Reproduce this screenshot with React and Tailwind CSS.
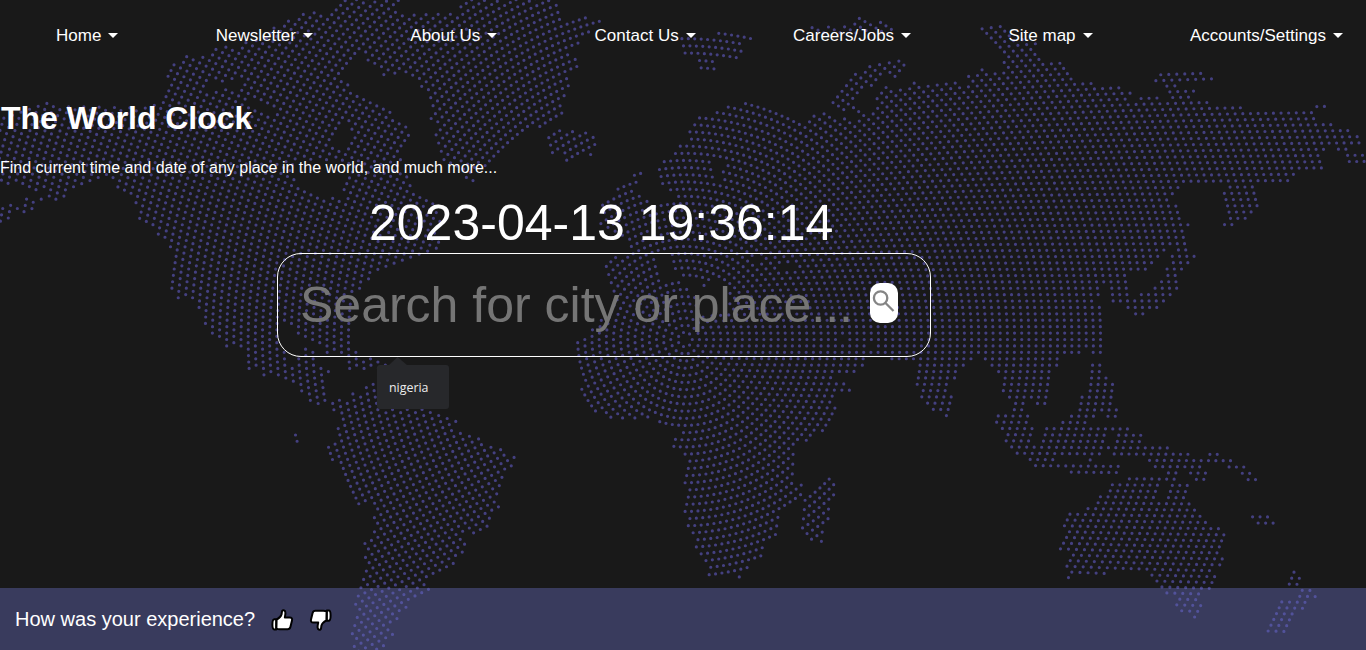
import React from "react";

/* Land and sea outlines. Units are thirds of a pixel, relative to each origin. */
const LAND = [
  // North America with the Arctic islands and Greenland
  [450, 0, "-470,350 -350,308 -250,312 -150,318 -10,318 40,300 38,285 45,262 52,205 85,178 108,160 130,170 160,162 190,140 248,140 300,122 350,95 400,62 440,45 460,32 495,28 515,38 535,38 570,-10 750,-10 745,20 765,38 790,45 830,35 918,33 950,-10 1222,-10 1232,30 1240,62 1262,65 1288,48 1350,52 1355,70 1325,90 1308,108 1292,140 1265,140 1255,165 1285,170 1288,205 1265,222 1260,262 1248,290 1242,345 1220,358 1190,380 1135,395 1095,420 1060,450 1020,490 980,510 978,550 965,548 930,520 890,490 873,475 875,455 855,435 850,402 852,375 835,355 855,335 838,300 832,275 808,262 800,235 785,232 735,225 702,232 685,205 650,188 640,165 620,168 605,185 592,205 580,222 590,238 608,265 640,278 670,297 725,322 745,360 775,370 788,405 775,432 760,460 750,500 775,525 785,560 800,575 835,592 870,640 870,750 765,785 690,815 650,845 618,880 608,930 608,1050 590,1062 528,1062 520,1040 398,975 400,1050 412,1075 432,1095 442,1070 458,1058 455,1036 475,1036 498,1048 502,1105 540,1105 548,1118 530,1135 535,1208 500,1222 450,1182 425,1150 380,1132 345,1120 342,1135 320,1108 295,1115 288,1050 232,1045 205,1020 180,1002 165,975 155,935 120,902 80,895 55,855 65,745 35,722 15,692 -5,680 -35,668 -40,640 -55,600 -75,588 -102,565 -110,540 -190,545 -210,562 -235,570 -245,592 -275,598 -330,608 -350,620 -368,645 -400,640 -420,665 -470,665 -470,615 -430,605 -400,616 -385,605 -378,586 -350,594 -330,585 -300,574 -320,568 -350,572 -380,555 -420,550 -470,550"],
  // Florida and the Caribbean
  [0, 975, "975,52 995,50 995,-30 1060,-30 1055,72 1080,75 1085,98 1115,90 1140,100 1165,110 1165,135 1120,128 1100,138 1040,138 1040,90 975,90"],
  // South America
  [0, 975, "992,228 1020,215 1030,228 1055,198 1085,205 1095,182 1125,168 1200,200 1270,245 1320,262 1372,280 1370,318 1410,322 1450,350 1510,365 1520,382 1555,395 1530,440 1500,485 1490,530 1505,545 1480,560 1465,605 1425,630 1400,620 1402,660 1390,690 1345,735 1305,752 1282,778 1295,795 1245,820 1225,850 1190,890 1175,900 1188,925 1150,972 1135,990 1060,990 1050,940 1048,920 1060,880 1062,810 1075,780 1090,740 1095,710 1085,695 1100,672 1085,655 1110,625 1122,590 1113,575 1122,548 1110,532 1077,545 1050,500 1033,455 1010,405 992,412 975,365 1010,345 1005,310 1022,285 1005,262 992,252"],
  // Galapagos
  [0, 975, "878,320 893,320 903,355 885,358"],
  // Iceland
  [1368, 0, "285,390 425,400 412,475 385,468 345,490 322,485 325,462 280,468 272,435"],
  // Svalbard
  [1368, 0, "665,105 775,110 780,90 900,108 895,122 865,125 855,182 785,170 788,215 728,212 720,170 678,168 678,125"],
  // Franz Josef Land
  [1368, 0, "1055,75 1150,72 1228,50 1320,80 1315,100 1060,100"],
  // Novaya Zemlya
  [1368, 0, "1120,305 1145,275 1170,245 1192,212 1230,205 1270,182 1305,178 1355,188 1345,210 1320,240 1295,225 1262,250 1225,265 1205,285 1200,315 1245,345 1220,370 1195,335 1155,330"],
  // Great Britain, France
  [1770, 480, "145,32 165,35 158,52 140,78 135,90 165,118 200,128 250,135 260,280 115,282 112,240 60,220 20,200 40,115 95,75"],
  // Europe, Africa and the western half of Asia
  [1368, 0, "600,500 640,475 650,450 665,428 690,418 690,385 712,362 750,345 785,328 815,310 885,305 930,317 970,332 1020,353 1048,368 1062,355 1100,332 1140,345 1185,358 1240,335 1285,328 1305,345 1320,305 1340,280 1365,250 1500,240 1500,1150 1360,1085 1345,1085 1345,1045 1320,1045 1320,1023 1240,1022 1240,1045 1256,1048 1256,1065 1230,1070 1230,1100 1182,1122 1135,1123 1150,1145 1190,1158 1192,1178 1155,1178 1135,1160 1138,1205 1150,1220 1128,1270 1120,1285 1085,1300 1060,1330 1050,1332 1045,1312 1018,1340 1022,1370 1015,1430 1020,1445 1045,1450 1043,1490 1010,1510 975,1540 972,1620 950,1622 928,1645 928,1675 890,1690 880,1708 858,1720 862,1740 842,1740 840,1722 750,1732 755,1702 735,1680 712,1645 715,1625 690,1560 692,1548 680,1515 690,1465 680,1425 690,1402 680,1362 645,1345 645,1310 672,1310 670,1290 620,1280 605,1255 580,1262 500,1262 455,1260 445,1238 412,1240 395,1210 375,1190 368,1165 378,1150 360,1082 355,1040 380,1010 402,988 422,970 470,910 475,875 452,845 448,810 460,765 520,763 510,735 640,620 660,590 635,572 637,558 612,550"],
  // Eastern Asia
  [2730, 0, "-100,262 0,258 40,264 85,265 105,240 125,258 165,255 170,225 215,198 235,215 272,205 272,180 290,165 268,145 250,120 205,85 235,72 275,68 305,95 330,115 382,120 385,165 402,185 455,178 475,200 500,240 550,240 580,258 630,255 670,270 665,300 675,310 685,285 745,285 760,300 785,290 768,262 760,248 730,248 735,230 755,213 880,210 915,235 905,245 805,245 802,262 862,265 845,295 895,297 905,315 1000,315 1030,332 1200,330 1212,308 1255,310 1252,325 1220,338 1225,365 1270,365 1300,385 1350,400 1362,435 1320,440 1320,455 1400,455 1400,492 1308,492 1300,458 1275,455 1260,440 1245,455 1238,475 1245,512 1165,515 1155,530 1145,550 1120,552 1100,548 1040,550 1040,575 1050,600 1032,645 1000,665 965,684 933,680 950,655 940,615 932,575 970,555 985,545 960,552 815,552 818,568 790,592 760,608 800,610 812,640 815,662 848,672 830,690 832,720 840,750 865,768 845,797 820,815 805,855 790,892 765,912 730,930 680,952 645,930 650,912 600,912 600,855 580,855 578,895 560,905 585,912 585,1065 540,1065 540,1045 520,1045 520,1065 465,1065 450,1102 425,1110 425,1180 415,1220 375,1220 370,1200 345,1215 345,1238 362,1240 362,1278 375,1282 372,1308 365,1330 400,1332 395,1312 395,1280 450,1278 450,1262 478,1260 478,1242 502,1238 508,1185 532,1180 540,1085 580,1085 580,1125 620,1145 610,1210 628,1225 620,1255 585,1255 568,1235 560,1255 535,1258 540,1277 660,1278 665,1295 705,1300 700,1332 780,1335 780,1352 840,1352 850,1372 890,1372 890,1353 930,1353 935,1372 970,1375 975,1392 1010,1395 1030,1415 1050,1440 1010,1448 990,1425 950,1408 930,1388 880,1390 895,1420 890,1445 855,1445 835,1410 808,1405 805,1430 800,1440 800,1447 840,1448 830,1490 845,1510 865,1530 885,1555 900,1575 950,1595 955,1610 940,1650 945,1685 920,1710 925,1735 905,1755 905,1775 870,1790 882,1815 865,1845 855,1860 805,1835 785,1785 745,1770 715,1720 620,1712 590,1725 480,1722 475,1742 465,1735 462,1690 480,1665 445,1655 460,1580 460,1550 475,1535 520,1530 555,1500 585,1480 600,1445 650,1440 650,1425 770,1425 765,1408 725,1405 705,1372 605,1370 605,1355 580,1350 580,1370 550,1375 550,1390 630,1388 640,1405 625,1425 475,1425 475,1408 370,1405 350,1375 315,1370 280,1325 280,1300 250,1275 260,1238 305,1235 310,1200 290,1195 275,1175 280,1130 240,1105 220,1080 205,1062 190,1080 165,1105 140,1120 120,1140 115,1175 135,1190 120,1250 108,1255 50,1225 15,1165 15,1090 -100,1070"],
  // Horn of Africa, Madagascar
  [1368, 975, "1152,188 1190,188 1190,203 1152,203"],
  [1368, 975, "1120,450 1145,475 1143,512 1128,525 1125,590 1105,592 1112,620 1105,658 1065,652 1028,610 1035,570 1035,515 1070,495"],
  // Fiji
  [2730, 975, "1020,567 1060,567 1100,585 1100,602 1060,602 1020,582"],
  // New Zealand
  [2730, 975, "1152,730 1178,755 1175,785 1205,785 1228,812 1195,840 1180,860 1155,860 1130,925 1062,925 1080,880 1105,840 1105,822 1150,822 1165,790 1128,785"],
];

const SEA = [
  // Hudson Bay and the Arctic channels
  [450, 0, "565,375 595,375 612,395 612,415 598,438 590,453 562,445 548,425 562,405"],
  [450, 0, "435,485 590,485 590,535 580,555 575,590 530,592 490,573 460,563 437,545"],
  [450, 0, "165,247 200,245 225,252 255,243 290,238 275,262 265,274 240,268 190,266 175,285 160,275"],
  [450, 0, "290,302 335,302 360,318 370,338 355,350 340,325 300,318"],
  // Baltic
  [1368, 0, "772,478 812,480 812,505 800,515 800,548 782,548 775,520"],
  // Mediterranean
  [1770, 480, "192,284 242,284 248,335 300,352 330,360 332,390 356,388 356,355 372,355 400,375 420,390 400,410 400,465 330,462 320,430 318,398 300,395 300,375 255,358 215,362 192,355 210,335"],
  // Black Sea, Caspian
  [1770, 480, "488,298 503,298 515,318 502,328 488,318"],
  [1770, 480, "565,310 600,308 615,322 600,332 570,325"],
  // Sea of Japan
  [2730, 0, "790,722 792,760 780,762 778,785 757,798 760,830 745,852 722,858 720,875 690,874 670,890 662,835 665,815 715,813 735,795 755,778 775,745"],
  // Gulf of Oman
  [1368, 975, "1148,36 1172,36 1172,50 1148,50"],
  // Java Sea, Celebes Sea, Gulf of Carpentaria
  [2730, 975, "590,320 618,320 618,360 590,350"],
  [2730, 975, "440,395 535,395 535,412 440,412"],
  [2730, 975, "550,395 700,392 720,420 650,412 550,412"],
  [2730, 975, "755,470 778,470 765,522 742,522"],
];

const parse = ([ox, oy, pts]) =>
  pts.split(" ").map((p) => {
    const [x, y] = p.split(",").map(Number);
    return [(x + ox) / 3, (y + oy) / 3];
  });

const inside = (poly, x, y) => {
  let hit = false;
  for (let i = 0, j = poly.length - 1; i < poly.length; j = i++) {
    const [xi, yi] = poly[i];
    const [xj, yj] = poly[j];
    if (yi > y !== yj > y && x < ((xj - xi) * (y - yi)) / (yj - yi) + xi) hit = !hit;
  }
  return hit;
};

/* Dots sit on concentric rings, seven more on each ring than on the last. */
const buildDots = () => {
  const land = LAND.map(parse);
  const sea = SEA.map(parse);
  let d = "";
  for (let ring = 1; ring < 108; ring++) {
    const count = ring * 7;
    for (let i = 0; i < count; i++) {
      const a = (i / count) * Math.PI * 2;
      const x = 685.1 + ring * 7.163 * Math.cos(a);
      const y = 339.5 + ring * 7.163 * Math.sin(a);
      if (x < -3 || x > 1369 || y < -3 || y > 653) continue;
      if (land.some((p) => inside(p, x, y)) && !sea.some((p) => inside(p, x, y))) {
        d += `M${x.toFixed(2)} ${y.toFixed(2)}h0`;
      }
    }
  }
  return d;
};

const DOTS = buildDots();

const NAV = ["Home", "Newsletter", "About Us", "Contact Us", "Careers/Jobs", "Site map", "Accounts/Settings"];

function WorldMap() {
  return (
    <svg className="absolute inset-0 h-[650px] w-[1366px]" viewBox="0 0 1366 650" aria-hidden="true">
      <path d={DOTS} fill="none" stroke="#444080" strokeWidth="3.2" strokeLinecap="round" />
    </svg>
  );
}

function Thumb({ down }) {
  return (
    <svg className={down ? "h-6 w-6 rotate-180" : "h-6 w-6"} viewBox="0 0 24 24" fill="#fff" stroke="#000" strokeWidth="2" strokeLinejoin="round" strokeLinecap="round">
      <path d="M6.2 11.2H4.4C3 11.2 2.4 13.6 2.4 16.6S3 21.4 4.2 21.4H6.2Z" />
      <path d="M6.6 11.6C9 10.2 11 8.4 11.6 6.2L12 3.4C12.4 1.6 15.2 2 15.4 4.4C15.6 6.2 15 8 14.8 9.4H19.6C21.8 9.4 22.4 10.8 22 12.4L20.4 19C20 20.6 19.2 21.2 17.6 21.2H9.6C8.4 21.2 7.4 21 6.4 20.6Z" />
    </svg>
  );
}

export default function App() {
  return (
    <div className="relative h-[650px] w-[1366px] overflow-hidden bg-[#191919] font-['Liberation_Sans',Arial,sans-serif] text-white">
      <WorldMap />
      <div className="relative flex h-full flex-col">
        <nav className="flex h-[70px] items-center justify-between pt-0.5 pr-[23px] pl-14 text-[17px]">
          {NAV.map((label) => (
            <a key={label} href="#" className="flex items-center gap-[7px] whitespace-nowrap">
              {label}
              <span className="mb-px border-x-5 border-t-5 border-x-transparent border-t-white" />
            </a>
          ))}
        </nav>
        <main className="flex flex-1 flex-col">
          <h1 className="mt-[30px] pl-px text-[32px] leading-9 font-bold tracking-[-0.05px]">The World Clock</h1>
          <p className="mt-5 text-[16px] leading-6">Find current time and date of any place in the world, and much more...</p>
          <div className="mt-[15px] ml-[277px] flex w-[654px] flex-col">
            <time className="pl-[92px] text-[50px] leading-[57px] whitespace-nowrap">2023-04-13 19:36:14</time>
            <div className="mt-px flex h-[104px] items-center rounded-[24px] border border-white pl-[22px]">
              <input
                className="w-[570px] bg-transparent text-[50px] leading-[58px] outline-none placeholder:text-[#757575]"
                placeholder="Search for city or place..."
              />
              <button className="mb-1 flex h-10 w-7 items-center justify-center rounded-[10px] bg-white" aria-label="Search">
                <svg className="mb-1 h-7 w-7" viewBox="0 0 28 28" fill="none" stroke="#858585" strokeWidth="2.3">
                  <circle cx="10.6" cy="11" r="6.7" />
                  <path d="M15.5 16L23.5 24" />
                </svg>
              </button>
            </div>
            <div className="ml-[100px] flex w-[72px] flex-col">
              <svg className="ml-3 h-2 w-[18px]" viewBox="0 0 18 8" fill="#27282b">
                <path d="M0 8L8.5 0L18 8Z" />
              </svg>
              <div className="flex h-11 items-center rounded-[3px] bg-[#27282b] pt-0.5 pl-3 font-['Open_Sans','Noto_Sans',sans-serif] text-[12.4px] text-[#ececec]">nigeria</div>
            </div>
          </div>
        </main>
        <footer className="flex h-[62px] items-center bg-[rgba(106,111,196,0.4)] pl-[15px] text-[20px]">
          <span>How was your experience?</span>
          <div className="mt-0.5 ml-[15px] flex gap-[15px]">
            <Thumb />
            <Thumb down />
          </div>
        </footer>
      </div>
    </div>
  );
}
